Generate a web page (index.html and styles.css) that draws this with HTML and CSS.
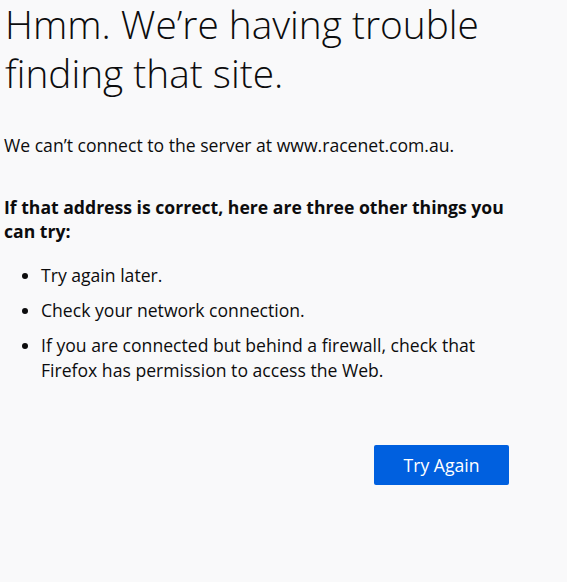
FILE: index.html
```html
<!DOCTYPE html>
<html lang="en">
<head>
    <meta charset="UTF-8">
    <title>Server Not Found</title>
    <link rel="stylesheet" href="styles.css">
</head>
<body>
    <div class="error-page">
        <h1 class="title">Hmm. We’re having trouble finding that site.</h1>
        <p class="intro">We can’t connect to the server at www.racenet.com.au.</p>
        <p class="hint">If that address is correct, here are three other things you can try:</p>
        <ul class="tips">
            <li>Try again later.</li>
            <li>Check your network connection.</li>
            <li>If you are connected but behind a firewall, check that Firefox has permission to access the Web.</li>
        </ul>
        <div class="actions">
            <button class="retry">Try Again</button>
        </div>
    </div>
</body>
</html>
```

FILE: styles.css
```css
body {
    margin: 0;
    background-color: #f9f9fa;
    color: #0c0c0d;
    font-family: "Open Sans", "Noto Sans", sans-serif;
    font-size: 17.6px;
}

.error-page {
    width: 505px;
    padding-left: 4px;
}

.title {
    margin: 0 0 0 1px;
    font-size: 38.8px;
    font-weight: 300;
    line-height: 49px;
}

.intro {
    margin: 35px 0 0;
    line-height: 25px;
}

.hint {
    margin: 37px 0 0;
    font-weight: 700;
    line-height: 24px;
}

.tips {
    margin: 20px 0 0;
    padding-left: 37px;
    line-height: 25px;
}

.tips li {
    margin-bottom: 10px;
}

.actions {
    display: flex;
    justify-content: flex-end;
    margin-top: 62px;
}

.retry {
    width: 135px;
    height: 40px;
    border: none;
    border-radius: 2px;
    background-color: #0060df;
    color: #fff;
    font-family: inherit;
    font-size: 17.6px;
}
```
